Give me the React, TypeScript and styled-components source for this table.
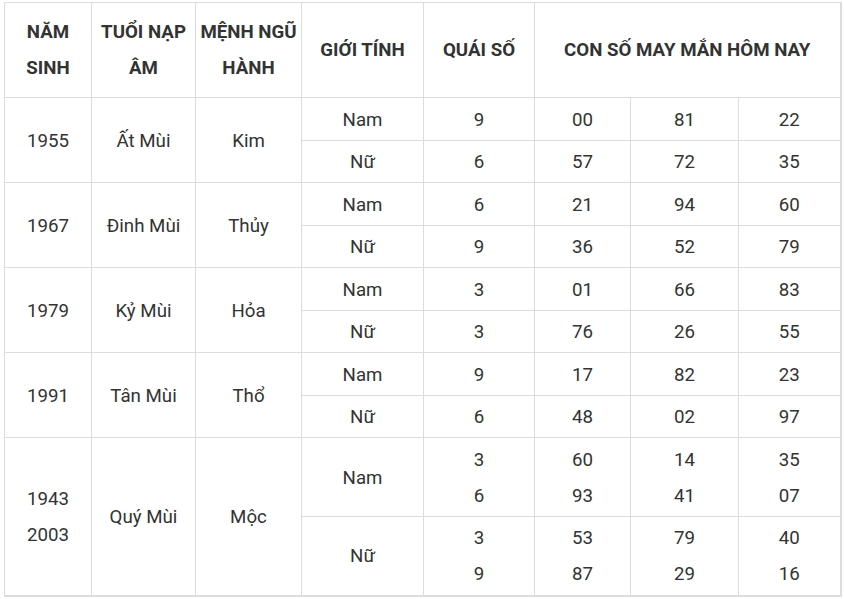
import React from "react";
import styled, { createGlobalStyle } from "styled-components";

const GlobalStyle = createGlobalStyle`
  body {
    margin: 0;
    background: #fff;
    font-family: Roboto, "Liberation Sans", Arial, sans-serif;
  }
`;

const Wrapper = styled.div`
  padding: 2px 0 0 4px;
`;

const Table = styled.table`
  border-collapse: collapse;
  table-layout: fixed;
  width: 836px;
  color: #333;
  font-size: 18.7px;
  line-height: 36px;
  border-right: 2px solid #dcdcdc;
  border-bottom: 2px solid #dcdcdc;
`;

const HeadRow = styled.tr`
  height: 95px;
`;

const Row = styled.tr<{ $h: number }>`
  height: ${({ $h }) => $h}px;
`;

const HeadCell = styled.th`
  border: 1px solid #dcdcdc;
  font-weight: 700;
  text-align: center;
  vertical-align: middle;
  padding: 0;
`;

const Cell = styled.td`
  border: 1px solid #dcdcdc;
  text-align: center;
  vertical-align: middle;
  padding: 1px 0 0;
  font-weight: 400;
`;

interface Pair {
  gender: string;
  quai: string[];
  nums: string[][];
}

interface Group {
  years: string[];
  napAm: string;
  menh: string;
  rows: Pair[];
  h: number[];
}

const groups: Group[] = [
  {
    years: ["1955"],
    napAm: "Ất Mùi",
    menh: "Kim",
    h: [43, 42],
    rows: [
      { gender: "Nam", quai: ["9"], nums: [["00"], ["81"], ["22"]] },
      { gender: "Nữ", quai: ["6"], nums: [["57"], ["72"], ["35"]] },
    ],
  },
  {
    years: ["1967"],
    napAm: "Đinh Mùi",
    menh: "Thủy",
    h: [43, 42],
    rows: [
      { gender: "Nam", quai: ["6"], nums: [["21"], ["94"], ["60"]] },
      { gender: "Nữ", quai: ["9"], nums: [["36"], ["52"], ["79"]] },
    ],
  },
  {
    years: ["1979"],
    napAm: "Kỷ Mùi",
    menh: "Hỏa",
    h: [43, 42],
    rows: [
      { gender: "Nam", quai: ["3"], nums: [["01"], ["66"], ["83"]] },
      { gender: "Nữ", quai: ["3"], nums: [["76"], ["26"], ["55"]] },
    ],
  },
  {
    years: ["1991"],
    napAm: "Tân Mùi",
    menh: "Thổ",
    h: [43, 42],
    rows: [
      { gender: "Nam", quai: ["9"], nums: [["17"], ["82"], ["23"]] },
      { gender: "Nữ", quai: ["6"], nums: [["48"], ["02"], ["97"]] },
    ],
  },
  {
    years: ["1943", "2003"],
    napAm: "Quý Mùi",
    menh: "Mộc",
    h: [79, 79],
    rows: [
      {
        gender: "Nam",
        quai: ["3", "6"],
        nums: [
          ["60", "93"],
          ["14", "41"],
          ["35", "07"],
        ],
      },
      {
        gender: "Nữ",
        quai: ["3", "9"],
        nums: [
          ["53", "87"],
          ["79", "29"],
          ["40", "16"],
        ],
      },
    ],
  },
];

const Lines = ({ items }: { items: string[] }) => (
  <>
    {items.map((t, i) => (
      <React.Fragment key={i}>
        {i > 0 && <br />}
        {t}
      </React.Fragment>
    ))}
  </>
);

const widths = [87, 104, 106, 122, 111, 96, 108, 102];

export default function App() {
  return (
    <Wrapper>
      <GlobalStyle />
      <Table>
        <colgroup>
          {widths.map((w, i) => (
            <col key={i} style={{ width: w }} />
          ))}
        </colgroup>
        <thead>
          <HeadRow>
            <HeadCell>
              NĂM
              <br />
              SINH
            </HeadCell>
            <HeadCell>
              TUỔI NẠP
              <br />
              ÂM
            </HeadCell>
            <HeadCell>
              MỆNH NGŨ
              <br />
              HÀNH
            </HeadCell>
            <HeadCell>GIỚI TÍNH</HeadCell>
            <HeadCell>QUÁI SỐ</HeadCell>
            <HeadCell colSpan={3}>CON SỐ MAY MẮN HÔM NAY</HeadCell>
          </HeadRow>
        </thead>
        <tbody>
          {groups.map((g) =>
            g.rows.map((r, idx) => (
              <Row key={g.years[0] + r.gender} $h={g.h[idx]}>
                {idx === 0 && (
                  <>
                    <Cell rowSpan={2}>
                      <Lines items={g.years} />
                    </Cell>
                    <Cell rowSpan={2}>{g.napAm}</Cell>
                    <Cell rowSpan={2}>{g.menh}</Cell>
                  </>
                )}
                <Cell>{r.gender}</Cell>
                <Cell>
                  <Lines items={r.quai} />
                </Cell>
                {r.nums.map((n, j) => (
                  <Cell key={j}>
                    <Lines items={n} />
                  </Cell>
                ))}
              </Row>
            ))
          )}
        </tbody>
      </Table>
    </Wrapper>
  );
}
